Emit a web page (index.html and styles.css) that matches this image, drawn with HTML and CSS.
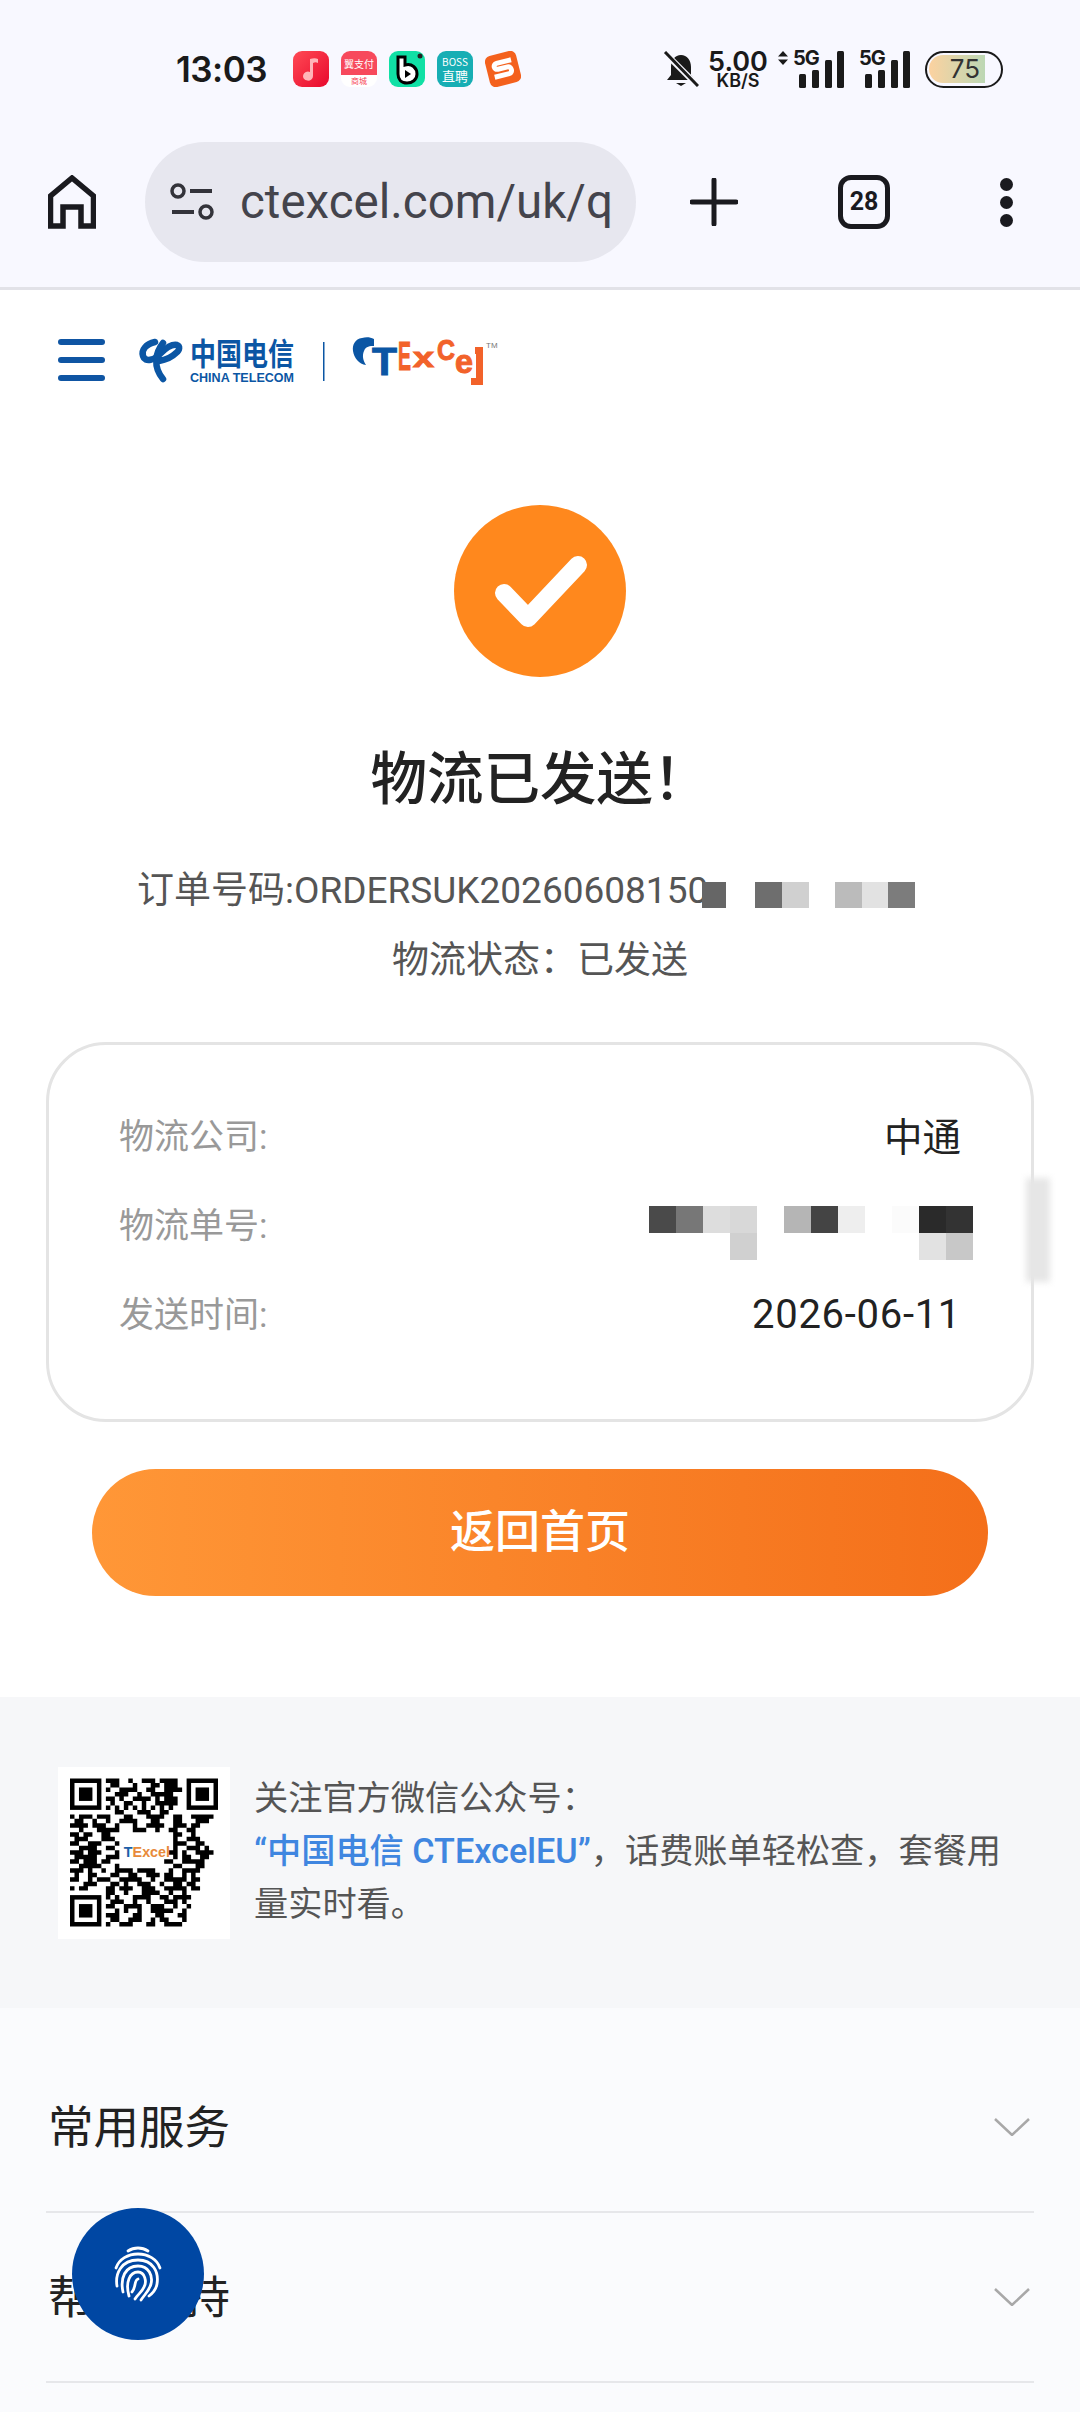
FILE: index.html
```html
<!DOCTYPE html>
<html lang="en">
<head>
    <meta charset="UTF-8">
    <meta name="viewport" content="width=device-width, initial-scale=1.0">
    <title>物流已发送</title>
    <link rel="stylesheet" href="styles.css">
</head>
<body>
    <!-- Browser chrome -->
    <header class="chrome">
        <div class="status-bar">
            <span class="clock">13:03</span>
            <div class="notif-icons">
                <svg class="app-icon" viewBox="0 0 36 36"><defs><linearGradient id="musicBg" x1="0" y1="0" x2="1" y2="1"><stop offset="0" stop-color="#ff4a55"/><stop offset="1" stop-color="#e8082c"/></linearGradient></defs><rect width="36" height="36" rx="9" fill="url(#musicBg)"/><path d="M20 8v17a5 4.500 0 1 1-3-4V8c3-1 6-1 8 0v4c-2-1-3-1-5 0z" fill="#ffb4b8"/></svg>
                <svg class="app-icon" viewBox="0 0 36 36"><rect width="36" height="36" rx="9" fill="#fff"/><path d="M0 24V9a9 9 0 0 1 9-9h18a9 9 0 0 1 9 9v15z" fill="#f7495c"/><text x="18" y="17" class="app-text" fill="#fff" font-size="10">翼支付</text><text x="18" y="33" class="app-text" fill="#f7495c" font-size="8">商城</text></svg>
                <svg class="app-icon" viewBox="0 0 36 36"><rect width="36" height="36" rx="9" fill="#10e0a5"/><path d="M9 6h7v8c7-2 12 3 12 9 0 6-5 9-10 9-6 0-9-4-9-9z" fill="#fff" stroke="#000" stroke-width="3"/><path d="M16 19l6 4-6 4z" fill="#000"/><circle cx="31" cy="5" r="2.500" fill="#222"/></svg>
                <svg class="app-icon" viewBox="0 0 36 36"><rect width="36" height="36" rx="9" fill="#17aeb4"/><text x="18" y="15" class="app-text" fill="#fff" font-size="10">BOSS</text><text x="18" y="30" class="app-text" fill="#fff" font-size="13">直聘</text></svg>
                <svg class="app-icon" viewBox="0 0 36 36"><g transform="rotate(-14 18 18)"><rect x="2" y="2" width="32" height="32" rx="6" fill="#f4611d"/><path d="M28 11H13c-4 0-4 6 0 6h10c4 0 4 7 0 7H8" fill="none" stroke="#fff" stroke-width="5"/></g></svg>
            </div>
            <div class="sys-icons">
                <svg class="bell" viewBox="0 0 36 36"><path d="M18 4c6 0 10 5 10 12v8l4 5H4l4-5v-8C8 9 12 4 18 4z" fill="#1a1a1a"/><path d="M13 32h10l-5 3z" fill="#1a1a1a"/><path d="M2 2l32 32" stroke="#f8f8ff" stroke-width="6"/><path d="M2 1l33 34" stroke="#1a1a1a" stroke-width="3"/></svg>
                <div class="speed"><span class="speed-num">5.00</span><span class="speed-unit">KB/S</span></div>
                <svg class="arrows" viewBox="0 0 10 14"><path d="M5 0l5 5.500H0zM5 14l5-5.500H0z" fill="#1a1a1a"/></svg>
                <div class="signal">
                    <span class="signal-tag">5G</span>
                    <svg class="bars" viewBox="0 0 46 37"><rect x="0" y="23" width="7" height="14" rx="1.500"/><rect x="13" y="19" width="7" height="18" rx="1.500"/><rect x="26" y="9" width="7" height="28" rx="1.500"/><rect x="38" y="0" width="7" height="37" rx="1.500"/></svg>
                </div>
                <div class="signal signal-b">
                    <span class="signal-tag">5G</span>
                    <svg class="bars" viewBox="0 0 46 37"><rect x="0" y="23" width="7" height="14" rx="1.500"/><rect x="13" y="19" width="7" height="18" rx="1.500"/><rect x="26" y="9" width="7" height="28" rx="1.500"/><rect x="38" y="0" width="7" height="37" rx="1.500"/></svg>
                </div>
                <div class="battery"><div class="battery-fill">75</div></div>
            </div>
        </div>
        <div class="toolbar">
            <svg class="home" viewBox="0 0 48 54"><path d="M2.500 51V21L24 3l21.500 18v30H33V32H15v19z" fill="none" stroke="#1a1a1f" stroke-width="5.500"/></svg>
            <div class="omnibox">
                <svg class="tune" viewBox="0 0 44 38"><circle cx="8" cy="8" r="6" fill="none" stroke="#33333a" stroke-width="3.500"/><path d="M20 8h22M2 29h22" stroke="#33333a" stroke-width="4"/><circle cx="36" cy="29" r="6" fill="none" stroke="#33333a" stroke-width="3.500"/></svg>
                <span class="url">ctexcel.com/uk/q</span>
            </div>
            <svg class="plus" viewBox="0 0 48 48"><path d="M24 2v44M2 24h44" stroke="#1a1a1f" stroke-width="5" stroke-linecap="round"/></svg>
            <div class="tabs">28</div>
            <div class="menu-dots"><i></i><i></i><i></i></div>
        </div>
    </header>

    <nav class="site-nav">
        <div class="burger"><i></i><i></i><i></i></div>
        <svg class="brand" viewBox="0 0 360 52">
            <g fill="none" stroke="#0b56a4" stroke-width="6.500" stroke-linecap="round">
                <path d="M15 7C6 9 1 15 3 21c2 7 12 4 18-3 5-5 11-9 16-8 3 1 3 5-1 8-4 4-11 7-17 8"/>
                <path d="M23 8C15 18 13 32 23 44"/>
            </g>
            <text x="50" y="0" transform="translate(0 30) scale(1 1.180)" class="brand-cn">中国电信</text>
            <text x="50" y="47" class="brand-en" textLength="104" lengthAdjust="spacingAndGlyphs">CHINA TELECOM</text>
            <rect x="183" y="7" width="1.500" height="39" fill="#0b56a4"/>
            <path d="M222 3c-7 1-10 7-9 13 1 7 6 13 13 14-3-5-4-9-2-14 2-5 6-5 10-5l0-7c-4-2-8-2-12-1z" fill="#0b56a4"/>
            <text x="232" y="40" class="logo-t" textLength="25" lengthAdjust="spacingAndGlyphs">T</text>
            <text x="258" y="35" class="logo-o" textLength="13" lengthAdjust="spacingAndGlyphs">E</text>
            <text x="273" y="32" class="logo-x" textLength="21" lengthAdjust="spacingAndGlyphs">x</text>
            <text x="297" y="25" class="logo-c" textLength="18" lengthAdjust="spacingAndGlyphs">C</text>
            <text x="315" y="38" class="logo-e" textLength="18" lengthAdjust="spacingAndGlyphs">e</text>
            <path d="M335 12h8v38h-12v-7h5V19h-1z" fill="#f2622a"/>
            <text x="346" y="13" class="logo-tm">TM</text>
        </svg>
    </nav>

    <main class="result">
        <svg class="ok-icon" viewBox="0 0 172 172"><circle cx="86" cy="86" r="86" fill="#ff881d"/><path d="M50 88l24 25 50-53" fill="none" stroke="#fff" stroke-width="18" stroke-linecap="round" stroke-linejoin="round"/></svg>
        <h1 class="result-title">物流已发送！</h1>
        <div class="order-line">
            <span>订单号码:ORDERSUK20260608150</span>
            <svg class="order-mosaic" viewBox="0 0 213 27"><rect width="24" height="26" fill="#666"/><rect x="53" width="27" height="26" fill="#6e6e6e"/><rect x="80" width="27" height="26" fill="#d0d0d0"/><rect x="133" width="27" height="26" fill="#bbb"/><rect x="160" width="26" height="26" fill="#e2e2e2"/><rect x="186" width="27" height="26" fill="#7c7c7c"/></svg>
        </div>
        <p class="ship-status">物流状态：已发送</p>

        <section class="ship-card">
            <div class="ship-row">
                <span class="ship-label">物流公司:</span>
                <span class="ship-value">中通</span>
            </div>
            <div class="ship-row">
                <span class="ship-label">物流单号:</span>
                <svg class="no-mosaic" viewBox="0 0 324 54"><rect width="27" height="27" fill="#4a4a4a"/><rect x="27" width="27" height="27" fill="#777"/><rect x="54" width="27" height="27" fill="#ddd"/><rect x="81" width="27" height="27" fill="#d8d8d8"/><rect x="81" y="27" width="27" height="27" fill="#d0d0d0"/><rect x="135" width="27" height="27" fill="#b5b5b5"/><rect x="162" width="27" height="27" fill="#444"/><rect x="189" width="27" height="27" fill="#eee"/><rect x="243" width="27" height="27" fill="#fbfbfb"/><rect x="270" width="27" height="27" fill="#2a2a2a"/><rect x="297" width="27" height="27" fill="#333"/><rect x="270" y="27" width="27" height="27" fill="#e2e2e2"/><rect x="297" y="27" width="27" height="27" fill="#c8c8c8"/></svg>
            </div>
            <div class="ship-row">
                <span class="ship-label">发送时间:</span>
                <span class="ship-value ship-date">2026-06-11</span>
            </div>
            <div class="smudge"></div>
        </section>

        <a class="home-btn">返回首页</a>
    </main>

    <section class="wechat">
        <div class="qr">
            <svg viewBox="0 0 33 33" width="148" height="149">
                <g fill="none" stroke="#000">
                    <rect x=".5" y=".5" width="6" height="6"/><rect x="26.500" y=".5" width="6" height="6"/><rect x=".5" y="26.500" width="6" height="6"/>
                    <path d="M8 .5h3m2 0h1m2 0h3m1 0h4M9 1.500h2m3 0h1m3 0h2m1 0h3M8 2.500h1m2 0h4m2 0h2m2 0h4M10 3.500h3m2 0h1m2 0h5M8 4.500h2m1 0h1m2 0h4m1 0h1m1 0h3M9 5.500h1m2 0h2m2 0h1m2 0h5M8 6.500h1m1 0h1m1 0h1m1 0h1m1 0h1m1 0h1m1 0h1m1 0h1M10 7.500h2m3 0h3m2 0h2M0 8.500h1m1 0h3m1 0h3m3 0h2m3 0h4m2 0h2m2 0h5M1 9.500h2m2 0h1m2 0h1m2 0h4m3 0h2m3 0h2m3 0h3M0 10.500h4m1 0h3m2 0h1m3 0h1m2 0h4m2 0h3m1 0h2M2 11.500h1m3 0h5m3 0h3m2 0h1m2 0h2m2 0h2M0 12.500h2m1 0h2m2 0h2m14 0h2m2 0h1M1 13.500h3m3 0h3m13 0h1m2 0h3M0 14.500h2m2 0h3m3 0h1m12 0h3m2 0h2M2 15.500h4m2 0h2m13 0h1m2 0h3m1 0h1M0 16.500h3m1 0h3m3 0h1m11 0h2m1 0h1m2 0h4M1 17.500h5m2 0h3m12 0h1m1 0h2m2 0h2M0 18.500h2m1 0h3m1 0h2m12 0h2m2 0h5M2 19.500h5m3 0h1m12 0h2m3 0h2M0 20.500h3m1 0h1m2 0h1m2 0h4m1 0h4m3 0h1m2 0h4M1 21.500h1m2 0h2m3 0h2m2 0h2m2 0h3m1 0h2m2 0h1m1 0h1M0 22.500h2m2 0h1m1 0h3m2 0h5m2 0h1m2 0h5m1 0h2M3 23.500h3m3 0h2m1 0h1m2 0h3m2 0h1m2 0h2m1 0h2M0 24.500h1m1 0h2m4 0h2m1 0h3m2 0h3m2 0h5m1 0h2M8 25.500h2m2 0h1m3 0h4m2 0h1m2 0h1M8 26.500h1m1 0h1m3 0h4m2 0h2m1 0h4M9 27.500h3m2 0h1m2 0h1m3 0h3m1 0h1M8 28.500h2m2 0h4m2 0h3m2 0h1m2 0h1M10 29.500h1m1 0h1m2 0h1m2 0h5m2 0h1M8 30.500h3m3 0h2m3 0h2m3 0h2M9 31.500h2m2 0h3m2 0h1m1 0h2m3 0h1M8 32.500h1m2 0h3m3 0h2m2 0h4"/>
                </g>
                <rect x="2" y="2" width="3" height="3"/><rect x="28" y="2" width="3" height="3"/><rect x="2" y="28" width="3" height="3"/>
                <text x="12" y="17.500" class="qr-logo">T<tspan class="qr-logo-o">Excel</tspan></text>
            </svg>
        </div>
        <p class="wechat-text">关注官方微信公众号：<br><b>“中国电信 CTExcelEU”</b>，话费账单轻松查，套餐用量实时看。</p>
    </section>

    <section class="links">
        <div class="link-row">
            <span>常用服务</span>
            <svg class="chevron" viewBox="0 0 36 18"><path d="M1 1l17 16L35 1" fill="none" stroke="#a8a8a8" stroke-width="2.500"/></svg>
        </div>
        <div class="link-row">
            <span>帮助支持</span>
            <svg class="chevron" viewBox="0 0 36 18"><path d="M1 1l17 16L35 1" fill="none" stroke="#a8a8a8" stroke-width="2.500"/></svg>
        </div>
    </section>

    <!-- Floating button -->
    <div class="fab">
        <svg viewBox="0 0 50 56" width="50" height="56" fill="none" stroke="#fff" stroke-width="2.800" stroke-linecap="round">
            <path d="M15 5C21 1 29 1 35 5"/>
            <path d="M3 22C6 13 15 8 25 8C35 8 44 13 47 22"/>
            <path d="M4 40C2 28 8 14 25 14C40 14 46 26 44 38C43 44 40 47 36 50"/>
            <path d="M10 46C7 32 12 20 25 20C36 20 40 30 38 38C36 45 32 48 28 54"/>
            <path d="M16 50C12 36 17 26 25 26C32 26 34 36 31 41C29 46 25 48 22 53"/>
            <path d="M25 33C21 34 23 42 19 46"/>
        </svg>
    </div>
</body>
</html>
```

FILE: styles.css
```css
* {
    box-sizing: border-box;
}
html, body {
    margin: 0;
    padding: 0;
    height: 2412px;
    overflow: hidden;
}
body {
    position: relative;
    background-color: #fff;
    color: #222;
    font-family: Roboto, "Noto Sans CJK SC", sans-serif;
}

/* Browser chrome */
.chrome {
    height: 290px;
    background-color: #f8f8ff;
    border-bottom: 3px solid #e2e2e8;
}
.status-bar {
    display: flex;
    align-items: center;
    height: 142px;
    padding: 0 77px 4px 176px;
    color: #1a1a1a;
    font-family: Inter, sans-serif;
}
.clock {
    width: 117px;
    font-size: 35px;
    font-weight: 600;
    letter-spacing: -0.5px;
}
.notif-icons {
    display: flex;
    gap: 12px;
}
.app-icon {
    width: 36px;
    height: 36px;
}
.app-text {
    font-family: "Noto Sans CJK SC", sans-serif;
    text-anchor: middle;
}
.sys-icons {
    display: flex;
    align-items: center;
    margin-left: auto;
}
.bell {
    width: 36px;
    height: 36px;
}
.speed {
    display: flex;
    flex-direction: column;
    align-items: center;
    width: 58px;
    margin-left: 10px;
    font-weight: 600;
    line-height: 1;
}
.speed-num {
    font-size: 27px;
    height: 23px;
    line-height: 23px;
}
.speed-unit {
    font-size: 18px;
    height: 15px;
    line-height: 15px;
}
.arrows {
    width: 10px;
    height: 14px;
    margin: 0 0 22px 11px;
}
.signal {
    position: relative;
    width: 52px;
    height: 37px;
    margin-left: 5px;
}
.signal-b {
    margin-left: 14px;
}
.signal-tag {
    position: absolute;
    top: -3px;
    left: 0;
    font-size: 20px;
    font-weight: 700;
    letter-spacing: -1px;
    line-height: 20px;
}
.bars {
    position: absolute;
    right: 0;
    bottom: 0;
    width: 46px;
    height: 37px;
    fill: #1a1a1a;
}
.battery {
    width: 78px;
    height: 37px;
    margin-left: 14px;
    padding: 2px;
    border: 2.500px solid #1a1a1a;
    border-radius: 19px;
    overflow: hidden;
}
.battery-fill {
    width: 56px;
    height: 28px;
    border-radius: 14px 0 0 14px;
    background: linear-gradient(90deg, #fcd2a0, #bcd7b4);
    font-size: 26px;
    font-weight: 400;
    line-height: 28px;
    text-align: right;
    padding-right: 5px;
    color: #333;
}
.toolbar {
    display: flex;
    align-items: center;
    height: 120px;
    padding-left: 48px;
}
.home {
    width: 48px;
    height: 54px;
}
.omnibox {
    display: flex;
    align-items: center;
    width: 491px;
    height: 120px;
    margin-left: 49px;
    padding-left: 25px;
    border-radius: 60px;
    background-color: #e7e7ef;
    overflow: hidden;
}
.tune {
    flex: none;
    width: 44px;
    height: 38px;
}
.url {
    width: 376px;
    margin-left: 26px;
    overflow: hidden;
    white-space: nowrap;
    font-size: 47.500px;
    color: #44444c;
}
.plus {
    width: 48px;
    height: 48px;
    margin-left: 54px;
}
.tabs {
    width: 52px;
    height: 54px;
    margin-left: 100px;
    border: 5px solid #1a1a1f;
    border-radius: 13px;
    font-size: 25px;
    font-weight: 700;
    line-height: 44px;
    text-align: center;
    color: #1a1a1f;
}
.menu-dots {
    display: flex;
    flex-direction: column;
    gap: 5px;
    margin-left: 110px;
}
.menu-dots i {
    display: block;
    width: 13px;
    height: 13px;
    border-radius: 50%;
    background-color: #1a1a1f;
}

/* Site nav */
.site-nav {
    display: flex;
    align-items: center;
    height: 140px;
    padding-left: 58px;
}
.burger {
    display: flex;
    flex-direction: column;
    gap: 12px;
    width: 47px;
}
.burger i {
    display: block;
    height: 6px;
    border-radius: 3px;
    background-color: #0f55a3;
}
.brand {
    width: 360px;
    height: 52px;
    margin: 2px 0 0 35px;
    overflow: visible;
}
.brand-cn {
    font-family: "Noto Sans CJK SC", sans-serif;
    font-size: 26px;
    font-weight: 700;
    fill: #0b56a4;
}
.brand-en {
    font-family: "Liberation Sans", sans-serif;
    font-size: 12px;
    font-weight: 700;
    fill: #0b56a4;
}
.logo-t, .logo-o, .logo-x, .logo-c, .logo-e {
    font-family: "Liberation Sans", sans-serif;
    font-weight: 700;
    fill: #f2622a;
    stroke: #f2622a;
    stroke-width: 1;
}
.logo-t {
    font-size: 39px;
    fill: #0b56a4;
    stroke: #0b56a4;
}
.logo-o {
    font-size: 41px;
}
.logo-x {
    font-size: 28px;
}
.logo-c {
    font-size: 30px;
}
.logo-e {
    font-size: 34px;
}
.logo-tm {
    font-family: "Liberation Sans", sans-serif;
    font-size: 8px;
    fill: #777;
}

/* Result */
.result {
    display: flex;
    flex-direction: column;
    align-items: center;
    height: 1267px;
    padding-top: 75px;
}
.ok-icon {
    width: 172px;
    height: 172px;
}
.result-title {
    margin: 65px 0 0;
    font-size: 56.500px;
    font-weight: 500;
    line-height: 76px;
    color: #222;
}
.order-line {
    display: flex;
    align-items: center;
    align-self: stretch;
    height: 54px;
    margin-top: 42px;
    padding-left: 137px;
    font-size: 37px;
    color: #555;
}
.order-mosaic {
    flex: none;
    width: 213px;
    height: 27px;
    margin: 16px 0 0 -6px;
}
.ship-status {
    margin: 20px 0 0;
    font-size: 37px;
    line-height: 54px;
    color: #555;
}
.ship-card {
    position: relative;
    align-self: stretch;
    height: 380px;
    margin: 54px 46px 0;
    padding: 49px 70px 0 70px;
    border: 3px solid #e4e4e4;
    border-radius: 60px;
}
.ship-row {
    display: flex;
    align-items: center;
    justify-content: space-between;
    height: 89px;
    padding-bottom: 10px;
}
.ship-label {
    font-size: 35px;
    color: #999;
}
.ship-value {
    font-size: 38.500px;
    color: #222;
}
.ship-date {
    margin-top: 5px;
    font-size: 40px;
    letter-spacing: 0.7px;
}
.no-mosaic {
    width: 324px;
    height: 54px;
    margin: 20px -12px 0 0;
}
.smudge {
    position: absolute;
    top: 133px;
    right: -19px;
    width: 24px;
    height: 104px;
    background-color: #e6e6e6;
    filter: blur(3px);
}
.home-btn {
    display: block;
    width: 896px;
    height: 127px;
    margin-top: 47px;
    border-radius: 64px;
    background: linear-gradient(90deg, #ff9737, #f46f1a);
    color: #fff;
    font-size: 45px;
    font-weight: 500;
    line-height: 127px;
    text-align: center;
}

/* WeChat follow */
.wechat {
    display: flex;
    align-items: center;
    height: 311px;
    padding: 0 60px 0 58px;
    background-color: #f6f7f9;
}
.qr {
    display: flex;
    align-items: center;
    justify-content: center;
    flex: none;
    width: 172px;
    height: 172px;
    background-color: #fff;
}
.qr-logo {
    font-family: "Liberation Sans", sans-serif;
    font-size: 3.200px;
    font-weight: 700;
    fill: #1c5fa8;
}
.qr-logo-o {
    fill: #e88a3a;
}
.wechat-text {
    margin: -2px 0 0 24px;
    font-size: 34.200px;
    line-height: 53px;
    color: #555;
}
.wechat-text b {
    font-weight: 500;
    color: #3f86e0;
}

/* Collapsed link groups */
.links {
    height: 404px;
    padding: 35px 46px 0;
    background-color: #fafbfd;
}
.link-row {
    display: flex;
    align-items: center;
    justify-content: space-between;
    height: 170px;
    padding-right: 4px;
    border-bottom: 2px solid #e6e7ea;
    font-size: 45.500px;
    color: #222;
}
.link-row span {
    margin: -6px 0 0 2px;
}
.chevron {
    width: 36px;
    height: 18px;
}

.fab {
    position: absolute;
    left: 72px;
    top: 2208px;
    display: flex;
    align-items: center;
    justify-content: center;
    width: 132px;
    height: 132px;
    border-radius: 50%;
    background-color: #0047a3;
}
```
